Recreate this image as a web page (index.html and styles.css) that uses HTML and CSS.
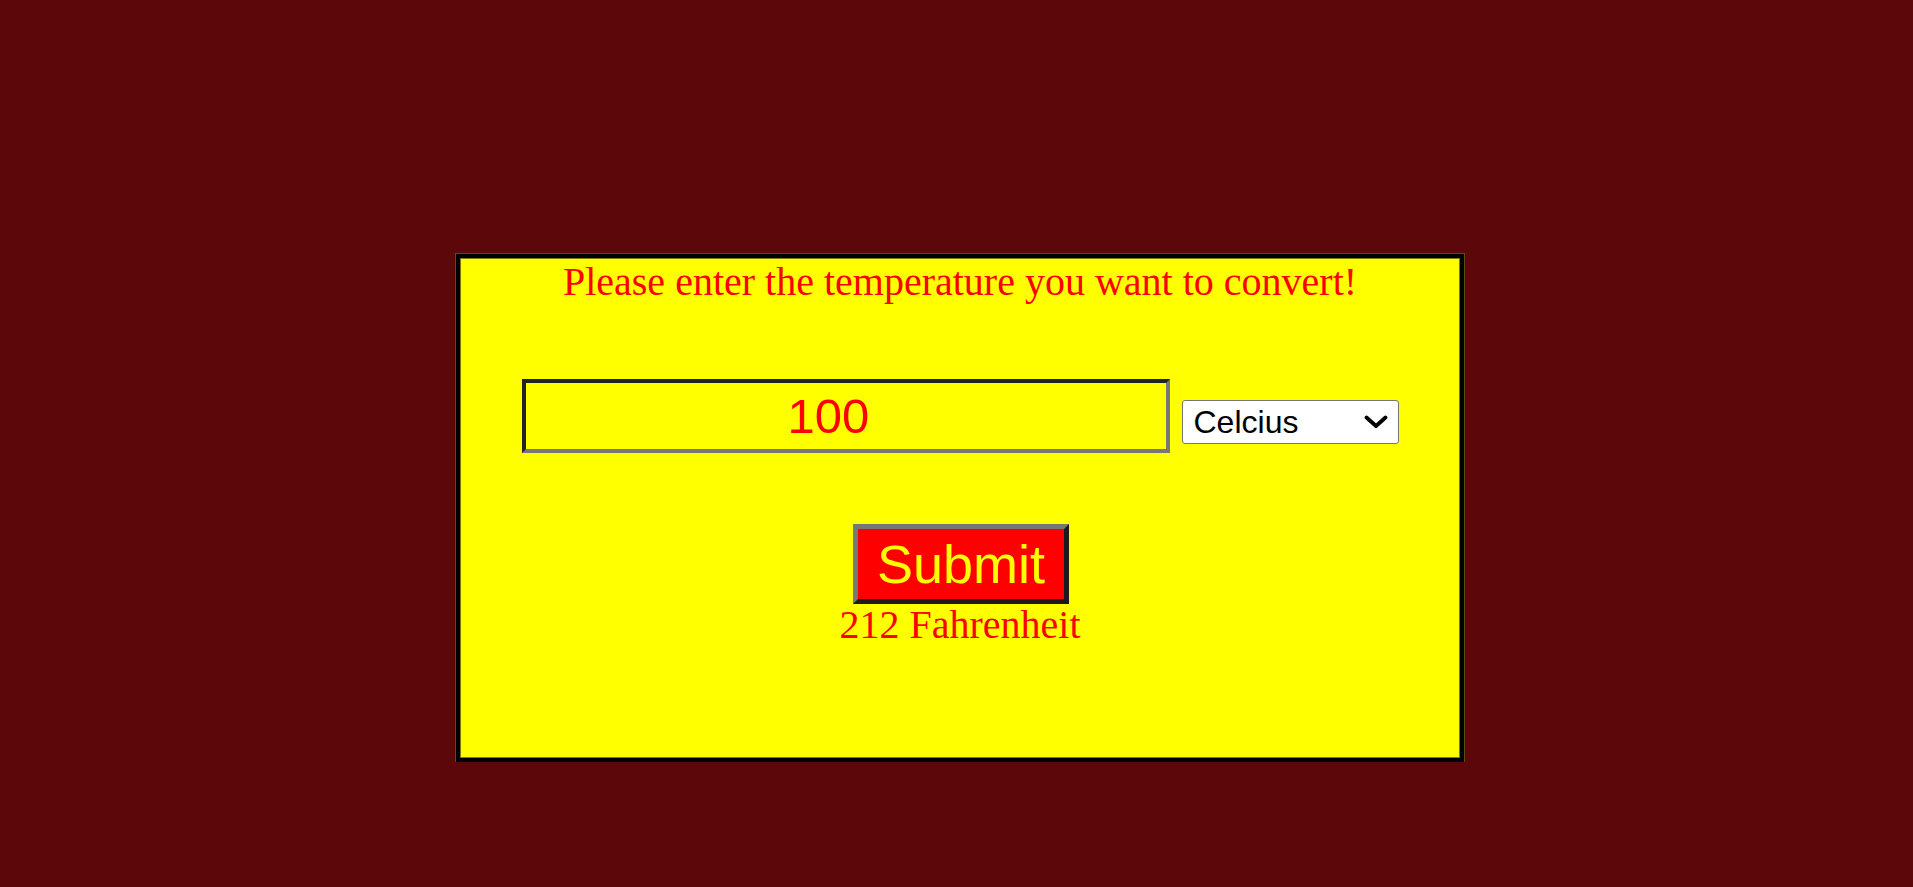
FILE: index.html
```html
<!DOCTYPE html>
<html lang="en">
<head>
<meta charset="utf-8">
<title>Temperature Converter</title>
<link rel="stylesheet" href="styles.css">
</head>
<body>
<div class="page">
  <form class="converter">
    <h1 class="title">Please enter the temperature you want to convert!</h1>
    <div class="row">
      <input class="temp-input" type="text" value="100">
      <div class="select-wrap">
        <select class="unit-select">
          <option>Celcius</option>
          <option>Fahrenheit</option>
        </select>
        <svg class="chevron" width="24" height="14" viewBox="0 0 24 14" aria-hidden="true">
          <path d="M2.5 2.5 L12 11 L21.5 2.5" fill="none" stroke="#000" stroke-width="3.8" stroke-linecap="round" stroke-linejoin="round"/>
        </svg>
      </div>
    </div>
    <button class="submit" type="button">Submit</button>
    <p class="result">212 Fahrenheit</p>
  </form>
</div>
</body>
</html>
```

FILE: styles.css
```css
html, body {
  margin: 0;
  padding: 0;
  background: #5c080b;
}

.page {
  display: flex;
  justify-content: center;
  padding-top: 254px;
  padding-left: 7px;
}

.converter {
  box-sizing: content-box;
  width: 1000px;
  height: 500px;
  border: 4px solid #000;
  outline: 1px solid #5e4f06;
  box-shadow: inset 0 0 0 1px #7a7a00;
  background: #ffff00;
  display: flex;
  flex-direction: column;
  align-items: center;
  margin: 0;
}

.title {
  margin: 0;
  font-family: "Liberation Serif", "Times New Roman", serif;
  font-weight: normal;
  font-size: 40px;
  color: #ff0000;
}

.row {
  display: flex;
  align-items: flex-start;
  gap: 12px;
  margin-top: 74px;
}

.temp-input {
  box-sizing: border-box;
  width: 648px;
  height: 74px;
  margin: 0;
  padding: 0 36px 0 2px;
  border-style: solid;
  border-width: 4px;
  border-color: #222 #777 #777 #222;
  background: #ffff00;
  color: #ff0000;
  font-family: "Liberation Sans", Arial, sans-serif;
  font-size: 49px;
  text-align: center;
  outline: none;
}

.select-wrap {
  position: relative;
  margin-top: 21px;
}

.unit-select {
  box-sizing: border-box;
  display: block;
  width: 217px;
  height: 44px;
  margin: 0;
  padding: 0 0 0 11px;
  border: 1px solid #767676;
  border-radius: 3px;
  background: #fff;
  color: #000;
  font-family: "Liberation Sans", Arial, sans-serif;
  font-size: 32px;
  -webkit-appearance: none;
  appearance: none;
}

.chevron {
  position: absolute;
  right: 11px;
  top: 15px;
  pointer-events: none;
}

.submit {
  box-sizing: border-box;
  margin-top: 71px;
  margin-left: 2px;
  width: 216px;
  height: 80px;
  padding: 0;
  border-style: solid;
  border-width: 5px;
  border-color: #777 #1b1b1b #1b1b1b #777;
  background: #ff0000;
  color: #ffff00;
  font-family: "Liberation Sans", Arial, sans-serif;
  font-size: 54px;
  line-height: 1;
}

.result {
  margin: -3px 0 0;
  font-family: "Liberation Serif", "Times New Roman", serif;
  font-size: 40px;
  color: #ff0000;
}
```
